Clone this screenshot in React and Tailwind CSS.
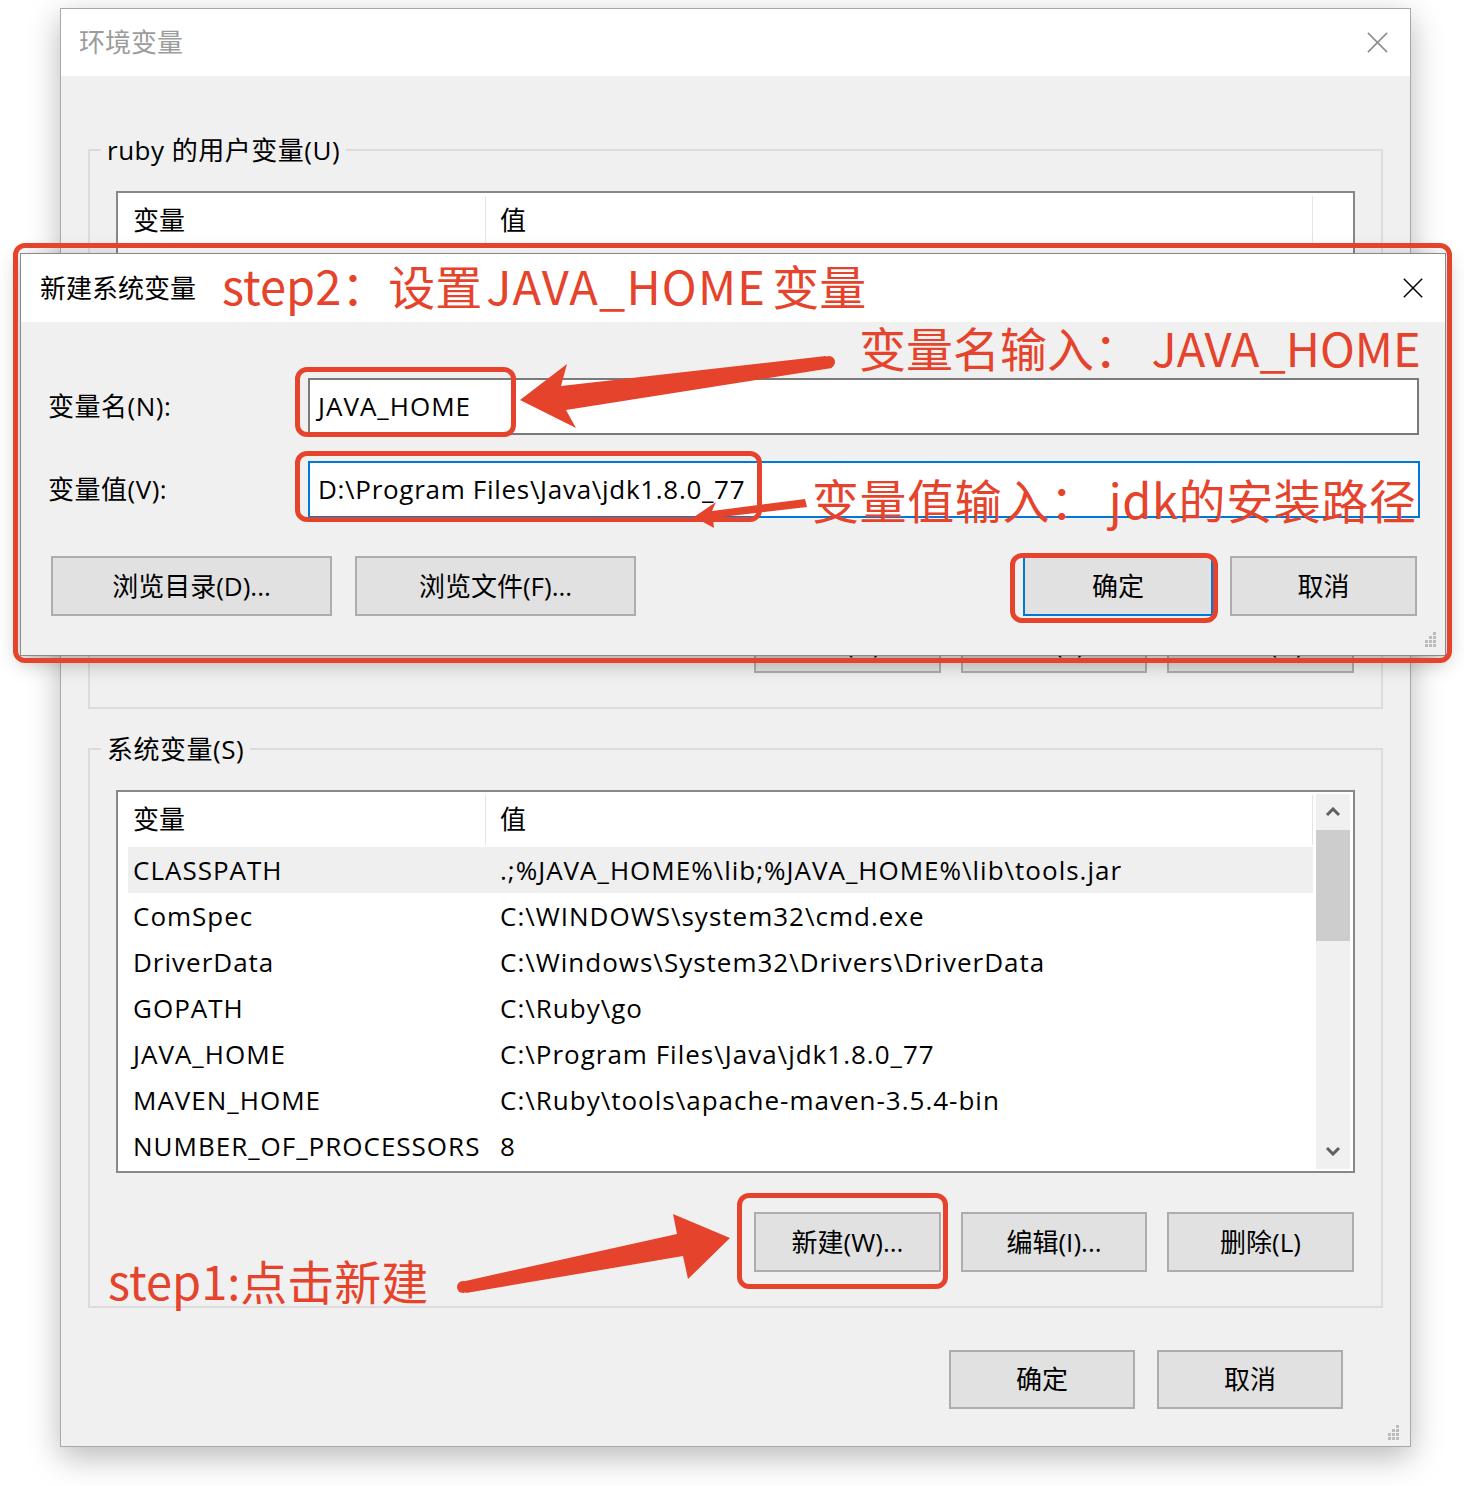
import React from 'react';

const ui = "font-['Open_Sans','Noto_Sans_CJK_SC',sans-serif]";
const note = "font-['Noto_Sans_CJK_SC',sans-serif]";

const sysRows = [
  ['CLASSPATH', '.;%JAVA_HOME%\\lib;%JAVA_HOME%\\lib\\tools.jar'],
  ['ComSpec', 'C:\\WINDOWS\\system32\\cmd.exe'],
  ['DriverData', 'C:\\Windows\\System32\\Drivers\\DriverData'],
  ['GOPATH', 'C:\\Ruby\\go'],
  ['JAVA_HOME', 'C:\\Program Files\\Java\\jdk1.8.0_77'],
  ['MAVEN_HOME', 'C:\\Ruby\\tools\\apache-maven-3.5.4-bin'],
  ['NUMBER_OF_PROCESSORS', '8'],
];

function CloseX({ className }) {
  return (
    <svg viewBox="0 0 24 24" className={className} fill="none" stroke="currentColor" strokeWidth="1.6">
      <path d="M2 2 L22 22 M22 2 L2 22" />
    </svg>
  );
}

function Grip({ className }) {
  const dots = [[9, 0], [9, 4], [5, 4], [9, 8], [5, 8], [1, 8], [9, 12], [5, 12], [1, 12]];
  return (
    <svg width="13" height="15" viewBox="0 0 13 15" className={className}>
      {dots.map(([x, y], i) => (
        <rect key={i} x={x} y={y} width="3" height="3" fill="#bcbcbc" />
      ))}
    </svg>
  );
}

function Chevron({ up }) {
  return (
    <svg width="16" height="10" viewBox="0 0 16 10" fill="none" stroke="#606060" strokeWidth="3">
      <path d={up ? 'M2 8 L8 2 L14 8' : 'M2 2 L8 8 L14 2'} />
    </svg>
  );
}

function Btn({ children, className = '' }) {
  return (
    <div className={`flex items-center justify-center bg-[#e1e1e1] border-2 text-[26px] text-black ${className}`}>
      {children}
    </div>
  );
}

function ListHeader() {
  return (
    <div className="flex h-[55px] items-center shrink-0">
      <div className="w-[368px] h-[50px] flex items-center pl-[15px] border-r border-[#e5e5e5]">变量</div>
      <div className="flex-1 h-[50px] flex items-center pl-[14px] border-r border-[#e5e5e5]">值</div>
    </div>
  );
}

function VarList({ rows = [], scroll, highlight }) {
  return (
    <div className="h-[383px] border-2 border-[#888888] bg-white flex text-[26px] text-black">
      <div className="w-[1195px] flex flex-col overflow-hidden">
        <ListHeader />
        <div className="flex flex-col tracking-[1px]">
          {rows.map((r, i) => (
            <div
              key={r[0]}
              className={`ml-[10px] h-[46px] shrink-0 flex items-center whitespace-nowrap ${highlight && i === 0 ? 'bg-[#efefef]' : ''}`}
            >
              <div className="w-[367px] pl-[5px]">{r[0]}</div>
              <div className="pl-[5px]">{r[1]}</div>
            </div>
          ))}
        </div>
      </div>
      {scroll && (
        <div className="ml-[3px] my-[2px] w-[34px] bg-[#f0f0f0] flex flex-col">
          <div className="h-[36px] flex items-center justify-center">
            <Chevron up />
          </div>
          <div className="h-[111px] bg-[#cdcdcd]" />
          <div className="flex-1" />
          <div className="h-[36px] flex items-center justify-center">
            <Chevron />
          </div>
        </div>
      )}
    </div>
  );
}

function GroupBox({ title, children, className = '' }) {
  return (
    <fieldset className={`border-2 border-[#dcdcdc] ${className}`}>
      <legend className="ml-[11px] px-[6px] text-[26px] leading-[36px] tracking-[0.5px] text-black">{title}</legend>
      {children}
    </fieldset>
  );
}

function Box({ className }) {
  return <div className={`absolute border-[5px] border-[#e5432b] rounded-[12px] ${className}`} />;
}

export default function App() {
  return (
    <div className={`relative w-[1464px] h-[1486px] bg-white overflow-hidden ${ui}`}>
      {/* 环境变量 window */}
      <div className="pl-[60px] pt-[8px]">
        <div className="relative w-[1351px] h-[1439px] border border-[#a8a8a8] bg-[#f0f0f0] flex flex-col shadow-[0_10px_30px_rgba(0,0,0,0.28)]">
          <div className="h-[67px] shrink-0 bg-white flex items-center justify-between pl-[18px] pr-[21px]">
            <span className="text-[26px] text-[#9c9c9c]">环境变量</span>
            <CloseX className="w-[23px] h-[23px] text-[#8c8c8c]" />
          </div>

          <div className="flex flex-col px-[27px] pt-[56px]">
            <GroupBox title="ruby 的用户变量(U)" className="pb-[34px]">
              <div className="pt-[23px] px-[26px]">
                <VarList />
                <div className="mt-[39px] flex justify-end gap-[20px] pr-[1px]">
                  <Btn className="w-[187px] h-[60px] border-[#adadad]">新建(N)...</Btn>
                  <Btn className="w-[186px] h-[60px] border-[#adadad]">编辑(E)...</Btn>
                  <Btn className="w-[187px] h-[60px] border-[#adadad]">删除(D)</Btn>
                </div>
              </div>
            </GroupBox>

            <GroupBox title="系统变量(S)" className="mt-[22px] pb-[34px]">
              <div className="pt-[23px] px-[26px]">
                <VarList rows={sysRows} scroll highlight />
                <div className="mt-[39px] flex justify-end gap-[20px] pr-[1px]">
                  <Btn className="w-[187px] h-[60px] border-[#adadad]">新建(W)...</Btn>
                  <Btn className="w-[186px] h-[60px] border-[#adadad]">编辑(I)...</Btn>
                  <Btn className="w-[187px] h-[60px] border-[#adadad]">删除(L)</Btn>
                </div>
              </div>
            </GroupBox>

            <div className="mt-[42px] flex justify-end gap-[22px] pr-[40px]">
              <Btn className="w-[186px] h-[59px] border-[#adadad]">确定</Btn>
              <Btn className="w-[186px] h-[59px] border-[#adadad]">取消</Btn>
            </div>
          </div>
          <Grip className="absolute right-[10px] bottom-[6px]" />
        </div>
      </div>

      {/* 新建系统变量 dialog */}
      <div className="absolute left-[20px] top-[253px] w-[1426px] h-[403px] border border-[#8a8a8a] bg-[#f0f0f0] flex flex-col shadow-[0_6px_20px_rgba(0,0,0,0.3)]">
        <div className="h-[68px] shrink-0 bg-white flex items-center justify-between pl-[19px] pr-[21px]">
          <span className="text-[26px] text-black">新建系统变量</span>
          <CloseX className="w-[22px] h-[22px] text-black" />
        </div>
        <div className="flex flex-col pt-[56px] text-[26px] text-black">
          <div className="flex items-center">
            <div className="w-[287px] pl-[27px] tracking-[0.5px]">变量名(N):</div>
            <div className="w-[1111px] h-[57px] border-2 border-[#7a7a7a] bg-white flex items-center pl-[8px] tracking-[1px]">JAVA_HOME</div>
          </div>
          <div className="flex items-center mt-[26px]">
            <div className="w-[287px] pl-[27px] tracking-[0.5px]">变量值(V):</div>
            <div className="w-[1112px] h-[57px] border-2 border-[#0078d7] bg-white flex items-center pl-[8px] tracking-[0.7px]">
              D:\Program Files\Java\jdk1.8.0_77
            </div>
          </div>
          <div className="flex items-center mt-[38px] pl-[30px] pr-[28px]">
            <Btn className="w-[281px] h-[60px] border-[#adadad]">浏览目录(D)...</Btn>
            <Btn className="w-[281px] h-[60px] border-[#adadad] ml-[23px]">浏览文件(F)...</Btn>
            <div className="flex-1" />
            <Btn className="w-[190px] h-[60px] border-[#0078d7]">确定</Btn>
            <Btn className="w-[187px] h-[60px] border-[#adadad] ml-[17px]">取消</Btn>
          </div>
        </div>
        <Grip className="absolute right-[8px] bottom-[8px]" />
      </div>

      {/* annotations */}
      <div className="absolute left-[13px] top-[243px] w-[1439px] h-[420px] border-[5px] border-[#e5432b] rounded-[12px]" />
      <Box className="left-[295px] top-[367px] w-[221px] h-[70px]" />
      <Box className="left-[295px] top-[451px] w-[467px] h-[71px]" />
      <Box className="left-[1010px] top-[553px] w-[208px] h-[70px]" />
      <Box className="left-[737px] top-[1193px] w-[211px] h-[96px]" />

      <div className={`absolute left-[222px] top-[261px] text-[47px] leading-none text-[#e5432b] whitespace-nowrap ${note}`}>
        step2：设置<span className="ml-[4px] mr-[6px] tracking-[1.2px]">JAVA_HOME</span>变量
      </div>
      <div className={`absolute left-[859px] top-[323px] text-[47px] leading-none text-[#e5432b] whitespace-nowrap ${note}`}>
        变量名输入： JAVA_HOME
      </div>
      <div className={`absolute left-[812px] top-[475px] text-[47px] leading-none tracking-[0.6px] text-[#e5432b] whitespace-nowrap ${note}`}>
        变量值输入： jdk的安装路径
      </div>
      <div className={`absolute left-[108px] top-[1256px] text-[47px] leading-none text-[#e5432b] whitespace-nowrap ${note}`}>
        step1:点击新建
      </div>

      <svg className="absolute left-0 top-0 pointer-events-none" width="1464" height="1486" viewBox="0 0 1464 1486">
        <g fill="#e5432b">
          <polygon points="520,400 567,364 561,386 826,356 832,368 566,410 576,428" />
          <circle cx="829" cy="362" r="6" />
          <polygon points="694,517 716,502 712,511 805,499 807,507 713,518 714,528" />
          <polygon points="730,1238 688,1279 683,1256 466,1293 461,1282 677,1234 673,1214" />
          <circle cx="463" cy="1287" r="6" />
        </g>
      </svg>
    </div>
  );
}
